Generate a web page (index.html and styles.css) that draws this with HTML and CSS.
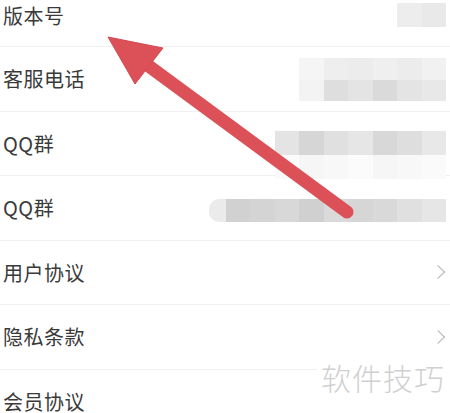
FILE: index.html
```html
<!doctype html>
<html>

<head>
    <title>关于</title>
    <link rel="stylesheet" href="styles.css">
</head>

<body>
    <div class="screen">
        <ul class="list">
            <li class="row first">
                <span class="label">版本号</span>
                <div class="blur b1">
                    <i class="c" style="background:#ededed"></i><i class="c" style="background:#e9e9e9"></i>
                </div>
            </li>
            <li class="row">
                <span class="label">客服电话</span>
                <div class="blur b2">
                    <div class="band">
                        <i class="c" style="background:#f5f5f5"></i><i class="c" style="background:#eeeeee"></i><i class="c" style="background:#ececec"></i><i class="c" style="background:#efefef"></i><i class="c" style="background:#ececec"></i><i class="c" style="background:#f1f1f1"></i>
                    </div>
                    <div class="band">
                        <i class="c" style="background:#f3f3f3"></i><i class="c" style="background:#dedede"></i><i class="c" style="background:#e4e4e4"></i><i class="c" style="background:#dadada"></i><i class="c" style="background:#e4e4e4"></i><i class="c" style="background:#e8e8e8"></i>
                    </div>
                </div>
            </li>
            <li class="row">
                <span class="label">QQ群</span>
                <div class="blur b3">
                    <div class="band">
                        <i class="c" style="background:#e4e4e4"></i><i class="c" style="background:#d6d6d6"></i><i class="c" style="background:#e0e0e0"></i><i class="c" style="background:#e6e6e6"></i><i class="c" style="background:#d8d8d8"></i><i class="c" style="background:#dedede"></i><i class="c" style="background:#e8e8e8"></i>
                    </div>
                    <div class="band">
                        <i class="c" style="background:#fafafa"></i><i class="c" style="background:#f6f6f6"></i><i class="c" style="background:#f8f8f8"></i><i class="c" style="background:#fbfbfb"></i><i class="c" style="background:#f6f6f6"></i><i class="c" style="background:#f8f8f8"></i><i class="c" style="background:#fafafa"></i>
                    </div>
                </div>
            </li>
            <li class="row">
                <span class="label">QQ群</span>
                <div class="blur b4">
                    <i class="c cap" style="background:#ebebeb"></i><i class="c" style="background:#d1d1d1"></i><i class="c" style="background:#d4d4d4"></i><i class="c" style="background:#d8d8d8"></i><i class="c" style="background:#d0d0d0"></i><i class="c" style="background:#dadada"></i><i class="c" style="background:#d6d6d6"></i><i class="c" style="background:#d9d9d9"></i><i class="c" style="background:#e0e0e0"></i><i class="c" style="background:#e6e6e6"></i>
                </div>
            </li>
            <li class="row">
                <span class="label">用户协议</span>
                <span class="chevron"></span>
            </li>
            <li class="row">
                <span class="label">隐私条款</span>
                <span class="chevron"></span>
            </li>
            <li class="row">
                <span class="label">会员协议</span>
            </li>
        </ul>

        <svg class="arrow" width="450" height="413" viewBox="0 0 450 413">
            <line x1="146" y1="64" x2="347" y2="212" stroke="#dc5157" stroke-width="13" stroke-linecap="round" />
            <polygon points="108,37 163,48 135,84" fill="#dc5157" stroke="#d44a50" stroke-width="1" stroke-linejoin="round" />
        </svg>

        <div class="watermark">软件技巧</div>
    </div>
</body>

</html>
```

FILE: styles.css
```css
* {
    margin: 0;
    padding: 0;
    box-sizing: border-box;
}

body {
    background: #ffffff;
    font-family: "Noto Sans CJK SC", "Noto Sans", sans-serif;
}

.screen {
    position: relative;
    width: 450px;
    height: 413px;
    overflow: hidden;
}

.list {
    list-style: none;
    margin-top: -15px;
}

.row {
    height: 64.5px;
    display: flex;
    align-items: center;
    justify-content: space-between;
    padding-left: 3px;
    padding-right: 4px;
    border-bottom: 1.5px solid #efefef;
}

.row.first {
    height: 62px;
}

.label {
    font-size: 20px;
    color: #3a3a3a;
    letter-spacing: 0.5px;
}

.blur {
    display: flex;
    flex-direction: column;
}

.band {
    display: flex;
}

.c {
    display: block;
    width: 24.5px;
    height: 22px;
}

.b1 {
    flex-direction: row;
    margin-bottom: 2px;
}

.b1 .c {
    height: 24px;
}

.b2 {
    margin-top: 2px;
}

.b2 .c {
    height: 21.5px;
}

.b3 {
    margin-top: 24px;
}

.b3 .c {
    height: 24px;
}

.b4 {
    flex-direction: row;
    margin-top: 5px;
}

.b4 .c {
    height: 23px;
}

.b4 .cap {
    width: 17px;
    border-radius: 10px 0 0 10px;
}

.chevron {
    width: 10px;
    height: 10px;
    border-top: 1.5px solid #b4b4b4;
    border-right: 1.5px solid #b4b4b4;
    transform: rotate(45deg);
    margin-right: 3px;
}

.arrow {
    position: absolute;
    top: 0;
    left: 0;
}

.watermark {
    position: absolute;
    right: 0;
    top: 356px;
    padding: 0 5px 0 4px;
    background: #ffffff;
    font-size: 30px;
    font-weight: 300;
    color: #d0d0d0;
    letter-spacing: 1px;
    line-height: 42px;
}
```
